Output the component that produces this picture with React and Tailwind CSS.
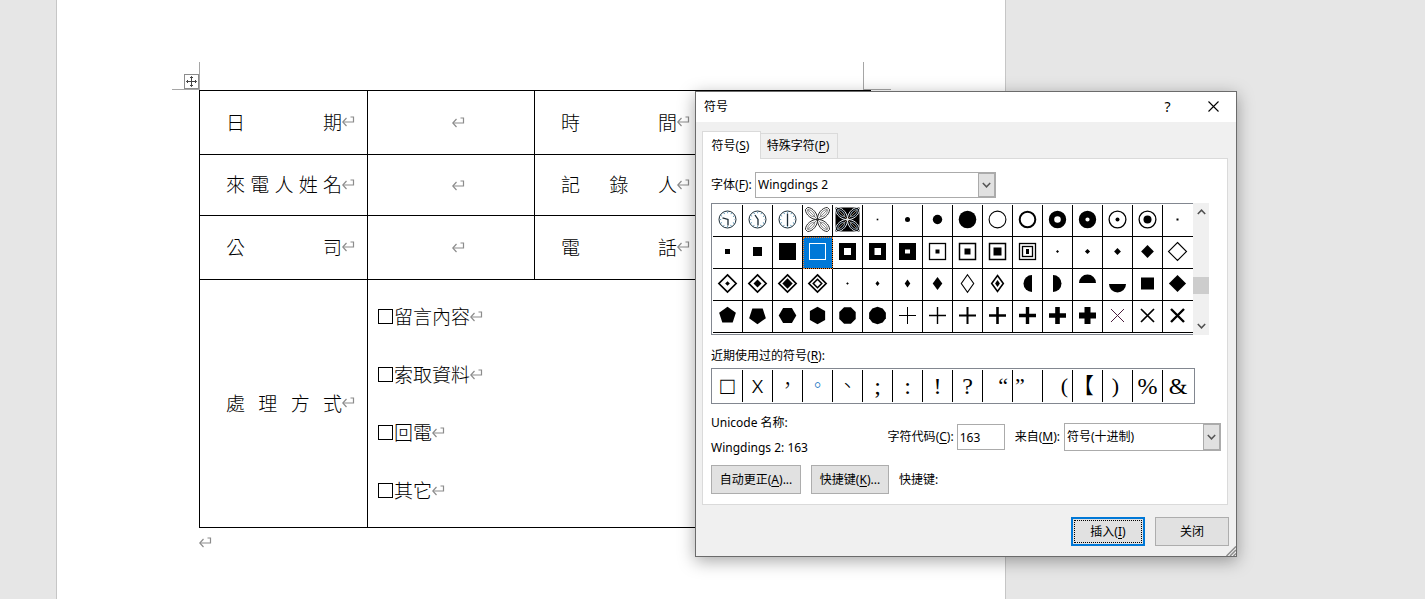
import React from "react";

const polygon = (n, r, startDeg) =>
  Array.from({ length: n }, (_, i) => {
    const a = ((startDeg + (360 / n) * i) * Math.PI) / 180;
    return `${(r * Math.cos(a)).toFixed(2)},${(r * Math.sin(a)).toFixed(2)}`;
  }).join(" ");

const Dot = ({ r }) => <circle r={r} fill="currentColor" />;
const Ring = ({ r, w }) => <circle r={r} fill="none" stroke="currentColor" strokeWidth={w} />;
const Box = ({ w, h = w }) => <rect x={-w / 2} y={-h / 2} width={w} height={h} fill="currentColor" />;
const Frame = ({ s, w }) => (
  <rect x={-s / 2} y={-s / 2} width={s} height={s} fill="none" stroke="currentColor" strokeWidth={w} />
);
const Diamond = ({ x, y = x }) => <path d={`M0 ${-y}L${x} 0 0 ${y} ${-x} 0Z`} fill="currentColor" />;
const DiamondLine = ({ x, y = x, w }) => (
  <path d={`M0 ${-y}L${x} 0 0 ${y} ${-x} 0Z`} fill="none" stroke="currentColor" strokeWidth={w} />
);
const Poly = ({ n, r, start }) => <polygon points={polygon(n, r, start)} fill="currentColor" />;
const Plus = ({ w }) => <path d="M-8.5 0H8.5M0-8.5V8.5" stroke="currentColor" strokeWidth={w} />;
const Cross = ({ w, color = "currentColor" }) => (
  <path d="M-6.5-6.5L6.5 6.5M6.5-6.5L-6.5 6.5" stroke={color} strokeWidth={w} />
);
const Clock = ({ hands }) => (
  <g fill="none" stroke="#1c2c36">
    <circle r="8.5" strokeWidth="1" />
    <circle r="7" strokeWidth="1.4" strokeDasharray="0.8 2.865" strokeDashoffset="0.4" stroke="#3d85ad" />
    <path d={hands} strokeWidth="1.3" />
  </g>
);
const Petals = ({ dark }) => (
  <g fill="none" stroke={dark ? "#e8eef4" : "#222"} strokeWidth="0.9">
    {dark && <rect x="-12" y="-12" width="24" height="24" fill="#000" stroke="none" />}
    {[45, 135, 225, 315].map((a) => (
      <g key={a} transform={`rotate(${a})`}>
        <path d="M0 0C4-4.500 12-5 15.500-1.500L15.500 1.500C12 5 4 4.500 0 0Z" />
        <path d="M4 0C6-2.600 11-3 14 0C11 3 6 2.600 4 0Z" stroke={dark ? "#9db4c6" : "#777"} />
        <path d="M0 0H13" strokeWidth="0.7" stroke={dark ? "#b9a58c" : "#666"} />
      </g>
    ))}
  </g>
);

const SYMBOLS = [
  <Clock hands="M0.500 6V0L-5-1.700" />,
  <Clock hands="M0.500 6V0L-2.500-4.500" />,
  <Clock hands="M0 6.500V-6" />,
  <Petals />,
  <Petals dark />,
  <Box w={1.6} />,
  <Dot r={2.5} />,
  <Dot r={4.7} />,
  <Dot r={8.8} />,
  <Ring r={8.4} w={1.1} />,
  <Ring r={7.8} w={2} />,
  <Ring r={6} w={5.4} />,
  <Ring r={5.4} w={6.6} />,
  <><Ring r={8.4} w={1.3} /><Dot r={2} /></>,
  <><Ring r={8.4} w={1.3} /><Dot r={4} /></>,
  <Box w={2} />,

  <Box w={5} />,
  <Box w={9} />,
  <Box w={17} />,
  <Frame s={16} w={1} />,
  <Frame s={12} w={5} />,
  <><Frame s={12} w={5} /><path d="M-3.500-4V4" stroke="currentColor" /></>,
  <><Frame s={12} w={5} /><path d="M-4-3H4M-4 3H4M-3.500-4V4M3.500-4V4" stroke="currentColor" strokeWidth="2" /></>,
  <><Frame s={16} w={1.3} /><Box w={4} /></>,
  <><Frame s={16} w={1.5} /><Box w={6} /></>,
  <><Frame s={16} w={1.5} /><Box w={8} /></>,
  <><Frame s={16} w={1.3} /><Frame s={10} w={1.3} /><Box w={3} h={5} /></>,
  <Diamond x={1.5} />,
  <Diamond x={2.6} />,
  <Diamond x={3.4} />,
  <Diamond x={6.4} />,
  <DiamondLine x={9} w={1.1} />,

  <><DiamondLine x={8.6} w={1.7} /><Diamond x={2.3} /></>,
  <><DiamondLine x={8.6} w={1.7} /><Diamond x={4} /></>,
  <><DiamondLine x={8.6} w={1.7} /><Diamond x={5.2} /></>,
  <><DiamondLine x={8.6} w={1.7} /><DiamondLine x={4.2} w={1.6} /></>,
  <Diamond x={1.3} />,
  <Diamond x={2} y={2.6} />,
  <Diamond x={2.8} y={4} />,
  <Diamond x={4.8} y={6.5} />,
  <DiamondLine x={6.2} y={8.8} w={1.1} />,
  <><DiamondLine x={5.8} y={8} w={1.6} /><Diamond x={2.4} y={3.4} /></>,
  <path d="M4.500-8.500A8.500 8.500 0 0 0 4.500 8.500Z" fill="currentColor" />,
  <path d="M-4.500-8.500A8.500 8.500 0 0 1-4.500 8.500Z" fill="currentColor" />,
  <path d="M-8.500-.5A8.500 8.500 0 0 1 8.500-.5Z" fill="currentColor" />,
  <path d="M-8.500.5A8.500 8.500 0 0 0 8.500.5Z" fill="currentColor" />,
  <Box w={13} h={12} />,
  <Diamond x={8.6} />,

  <Poly n={5} r={8.8} start={-90} />,
  <Poly n={5} r={8.8} start={90} />,
  <Poly n={6} r={8.8} start={0} />,
  <Poly n={6} r={8.8} start={90} />,
  <Poly n={8} r={8.9} start={22.5} />,
  <Poly n={10} r={8.8} start={90} />,
  <Plus w={1} />,
  <Plus w={1.4} />,
  <Plus w={2} />,
  <Plus w={2.6} />,
  <Plus w={3.4} />,
  <Plus w={4.6} />,
  <Plus w={6} />,
  <Cross w={1} color="#4a1d3d" />,
  <Cross w={1.7} />,
  <Cross w={2.4} />,
];

const SELECTED = 19;

const RECENT = ["□", "x", "，", "。", "、", ";", ":", "!", "?", "“", "”", "(", "【", ")", "%", "&"];
const RECENT_CLASS = {
  "□": "text-[24px]",
  x: "pb-1 font-['Noto_Sans',sans-serif] text-[24px]",
  "，": "text-[20px]",
  "。": "text-[18px] text-[#0a6ebd]",
  "、": "text-[20px]",
  "“": "justify-end pr-1 text-[22px]",
  "”": "justify-start pl-0.5 text-[22px]",
  "(": "justify-end pr-1 text-[22px]",
  "【": "justify-end pr-2 text-[22px]",
  ")": "pr-1 text-[22px]",
};

function ReturnMark() {
  return (
    <svg className="h-[13px] w-[13px] shrink-0" viewBox="0 0 13 13" fill="none" stroke="#8c8c8c" aria-hidden="true">
      <path d="M8.500 2H11.500V7H1" strokeWidth="1.200" />
      <path d="M4.500 3L0.800 7 4.500 11" strokeWidth="1.200" />
    </svg>
  );
}

function Chevron({ up = false, className = "" }) {
  return (
    <svg className={className} width="9" height="6" viewBox="0 0 9 6" fill="none" stroke="currentColor" aria-hidden="true">
      <path d={up ? "M0.800 5L4.500 1.200 8.200 5" : "M0.800 1L4.500 4.800 8.200 1"} strokeWidth="1.500" />
    </svg>
  );
}

function HeadCell({ children }) {
  return (
    <th scope="row" className="border border-black p-0 pb-0.5 pl-[26px] text-left font-light">
      <div className="flex items-center">
        <span className="w-[116px] leading-6 [text-align-last:justify]">{children}</span>
        <ReturnMark />
      </div>
    </th>
  );
}

function BlankCell() {
  return (
    <td className="border border-black p-0 pl-3.5">
      <div className="flex justify-center">
        <ReturnMark />
      </div>
    </td>
  );
}

function Document() {
  const rows = [
    ["日期", "時間", "h-16"],
    ["來電人姓名", "記錄人", "h-[61px]"],
    ["公司", "電話", "h-16"],
  ];
  return (
    <main
      lang="zh-Hant"
      className="ml-14 min-h-screen w-full max-w-[950px] border-x border-[#c6c6c6] bg-white pt-[62px] font-['Noto_Sans_CJK_TC',sans-serif] text-[19px] font-light text-black"
    >
      <div className="ml-[115px] flex w-[719px] justify-between">
        <div className="flex h-7 w-7 items-end justify-end border-r border-b border-[#a6a6a6]">
          <svg className="h-[15px] w-[15px]" viewBox="0 0 15 15" fill="none" stroke="#444" aria-label="移動表格">
            <rect x="0.500" y="0.500" width="14" height="14" stroke="#8c8c8c" fill="#fff" />
            <path d="M7.500 2.500V12.500M2.500 7.500H12.500" />
            <path d="M6 4L7.500 2.500 9 4M6 11L7.500 12.500 9 11M4 6L2.500 7.500 4 9M11 6L12.500 7.500 11 9" />
          </svg>
        </div>
        <div className="h-7 w-7 border-b border-l border-[#a6a6a6]" />
      </div>
      <table className="ml-[142px] w-[672px] table-fixed border-collapse">
        <colgroup>
          <col className="w-[168px]" />
          <col className="w-[167px]" />
          <col className="w-[168px]" />
          <col />
        </colgroup>
        <tbody>
          {rows.map(([a, b, h]) => (
            <tr key={a} className={h}>
              <HeadCell>{a}</HeadCell>
              <BlankCell />
              <HeadCell>{b}</HeadCell>
              <BlankCell />
            </tr>
          ))}
          <tr className="h-[248px]">
            <HeadCell>處理方式</HeadCell>
            <td colSpan={3} className="border border-black p-0 pt-[7px] pl-2.5 align-top">
              {["留言內容", "索取資料", "回電", "其它"].map((t) => (
                <label key={t} className="flex h-[58px] items-center">
                  <input type="checkbox" className="mr-px h-[15px] w-[15px] appearance-none border border-black" />
                  {t}
                  <ReturnMark />
                </label>
              ))}
            </td>
          </tr>
        </tbody>
      </table>
      <div className="ml-[142px] pt-2">
        <ReturnMark />
      </div>
    </main>
  );
}

function Key({ k }) {
  return (
    <>
      (<span className="underline underline-offset-2">{k}</span>)
    </>
  );
}

function DropDown({ id, value, className }) {
  return (
    <div className={`relative border border-[#ababab] ${className}`}>
      <select id={id} defaultValue={value} className="h-full w-full appearance-none bg-white pr-5 pl-0.5 outline-none">
        <option>{value}</option>
      </select>
      <span className="pointer-events-none absolute inset-y-0 right-0 flex w-[17px] items-center justify-center border border-[#ababab] bg-[#e1e1e1] text-[#555]">
        <Chevron />
      </span>
    </div>
  );
}

const BUTTON = "h-[29px] border border-[#adadad] bg-[#e1e1e1] text-center";

function SymbolDialog() {
  return (
    <section
      role="dialog"
      aria-label="符号"
      lang="zh-Hans"
      className="absolute top-[91px] left-[695px] w-[542px] border border-[#6b6b6b] bg-[#f0f0f0] font-['Noto_Sans','Noto_Sans_CJK_SC',sans-serif] text-[12px] leading-4 text-black shadow-[0_4px_16px_rgba(0,0,0,0.35)]"
    >
      <header className="flex h-[30px] items-center bg-white pl-2">
        <h1 className="flex-1">符号</h1>
        <button type="button" aria-label="帮助" className="h-full w-[45px] text-[14px]">?</button>
        <button type="button" aria-label="关闭窗口" className="flex h-full w-[46px] items-center justify-center pb-0.5">
          <svg width="11" height="11" viewBox="0 0 11 11" stroke="#000" aria-hidden="true">
            <path d="M0.500 0.500L10.500 10.500M10.500 0.500L0.500 10.500" strokeWidth="1.100" />
          </svg>
        </button>
      </header>

      <div className="pt-[9px] pr-2 pl-1.5">
        <div role="tablist" className="relative -mb-px flex items-end">
          <button type="button" role="tab" aria-selected="true" className="h-7 w-[59px] border border-b-0 border-[#dadada] bg-white pr-0.5 text-center">
            符号<Key k="S" />
          </button>
          <button type="button" role="tab" aria-selected="false" className="-ml-px h-[26px] w-[78px] border border-[#dadada] pr-0.5 text-center">
            特殊字符<Key k="P" />
          </button>
        </div>

        <div className="border border-[#dadada] bg-white pt-[13px] pr-1.5 pb-2.5 pl-2">
          <div className="flex items-center">
            <label htmlFor="font" className="w-11">
              字体<Key k="F" />:
            </label>
            <DropDown id="font" value="Wingdings 2" className="h-[26px] w-[241px]" />
          </div>

          <div className="mt-[5px] flex">
            <div className="border-y border-l border-[#828790] py-px pl-px">
              <div className="grid grid-cols-[repeat(16,30px)]">
                {SYMBOLS.map((glyph, i) => (
                  <button
                    type="button"
                    key={i}
                    aria-label={`符号 ${i + 1}`}
                    className={`h-8 border-b border-black ${i % 16 === 15 ? "" : "border-r"} ${
                      i === SELECTED
                        ? "bg-[#0078d7] text-white outline-1 -outline-offset-1 outline-[#ff8728] outline-dotted"
                        : "bg-white text-black"
                    }`}
                  >
                    <svg className="block" width="29" height="31" viewBox="-14.500 -14.500 29 31" aria-hidden="true">
                      {glyph}
                    </svg>
                  </button>
                ))}
              </div>
            </div>
            <div className="flex w-4 flex-col items-center bg-[#f0f0f0] py-1.5 text-[#505050]">
              <Chevron up />
              <div className="mt-[62px] h-[17px] w-full bg-[#cdcdcd]" />
              <Chevron className="mt-auto" />
            </div>
          </div>

          <h2 className="flex h-[33px] items-end pb-1">
            <span>
              近期使用过的符号<Key k="R" />:
            </span>
          </h2>
          <div className="flex w-[484px] border border-[#828790] p-px font-['Liberation_Serif','Noto_Sans_CJK_TC',serif] text-[24px] font-light">
            {RECENT.map((c, i) => (
              <button
                type="button"
                key={c}
                lang="zh-Hant"
                className={`flex h-8 w-[30px] items-center justify-center leading-8 ${i === 15 ? "" : "border-r border-black"} ${RECENT_CLASS[c] || ""}`}
              >
                {c}
              </button>
            ))}
          </div>

          <div className="mt-1.5 flex items-center">
            <div className="flex-1 leading-[25px]">
              <p>Unicode 名称:</p>
              <p>Wingdings 2: 163</p>
            </div>
            <div className="flex items-center pt-1">
              <label htmlFor="code" className="mr-[3px]">
                字符代码<Key k="C" />:
              </label>
              <input id="code" defaultValue="163" className="mr-2.5 h-[26px] w-12 border border-[#ababab] px-0.5 outline-none" />
              <label htmlFor="from" className="mr-1">
                来自<Key k="M" />:
              </label>
              <DropDown id="from" value="符号(十进制)" className="h-7 w-[157px]" />
            </div>
          </div>

          <div className="mt-[5px] flex items-center gap-2.5">
            <button type="button" className={`${BUTTON} w-[90px]`}>
              自动更正<Key k="A" />...
            </button>
            <button type="button" className={`${BUTTON} w-[78px]`}>
              快捷键<Key k="K" />...
            </button>
            <span>快捷键:</span>
          </div>
        </div>
      </div>

      <footer className="flex justify-end gap-2.5 pt-3 pr-[7px] pb-2.5">
        <button type="button" className="h-[29px] w-[74px] border-2 border-[#0078d7] bg-[#e1e1e1] text-center outline-1 -outline-offset-4 outline-black outline-dotted">
          插入<Key k="I" />
        </button>
        <button type="button" className={`${BUTTON} w-[74px]`}>关闭</button>
      </footer>
      <svg className="absolute right-0 bottom-0" width="10" height="10" viewBox="0 0 10 10" stroke="#8c8c8c" strokeWidth="1.500" aria-hidden="true">
        <path d="M0.500 10L10 0.500M4 10L10 4M7.500 10L10 7.500" />
      </svg>
    </section>
  );
}

export default function App() {
  return (
    <div className="relative min-h-screen overflow-hidden bg-[#e6e6e6]">
      <Document />
      <SymbolDialog />
    </div>
  );
}
